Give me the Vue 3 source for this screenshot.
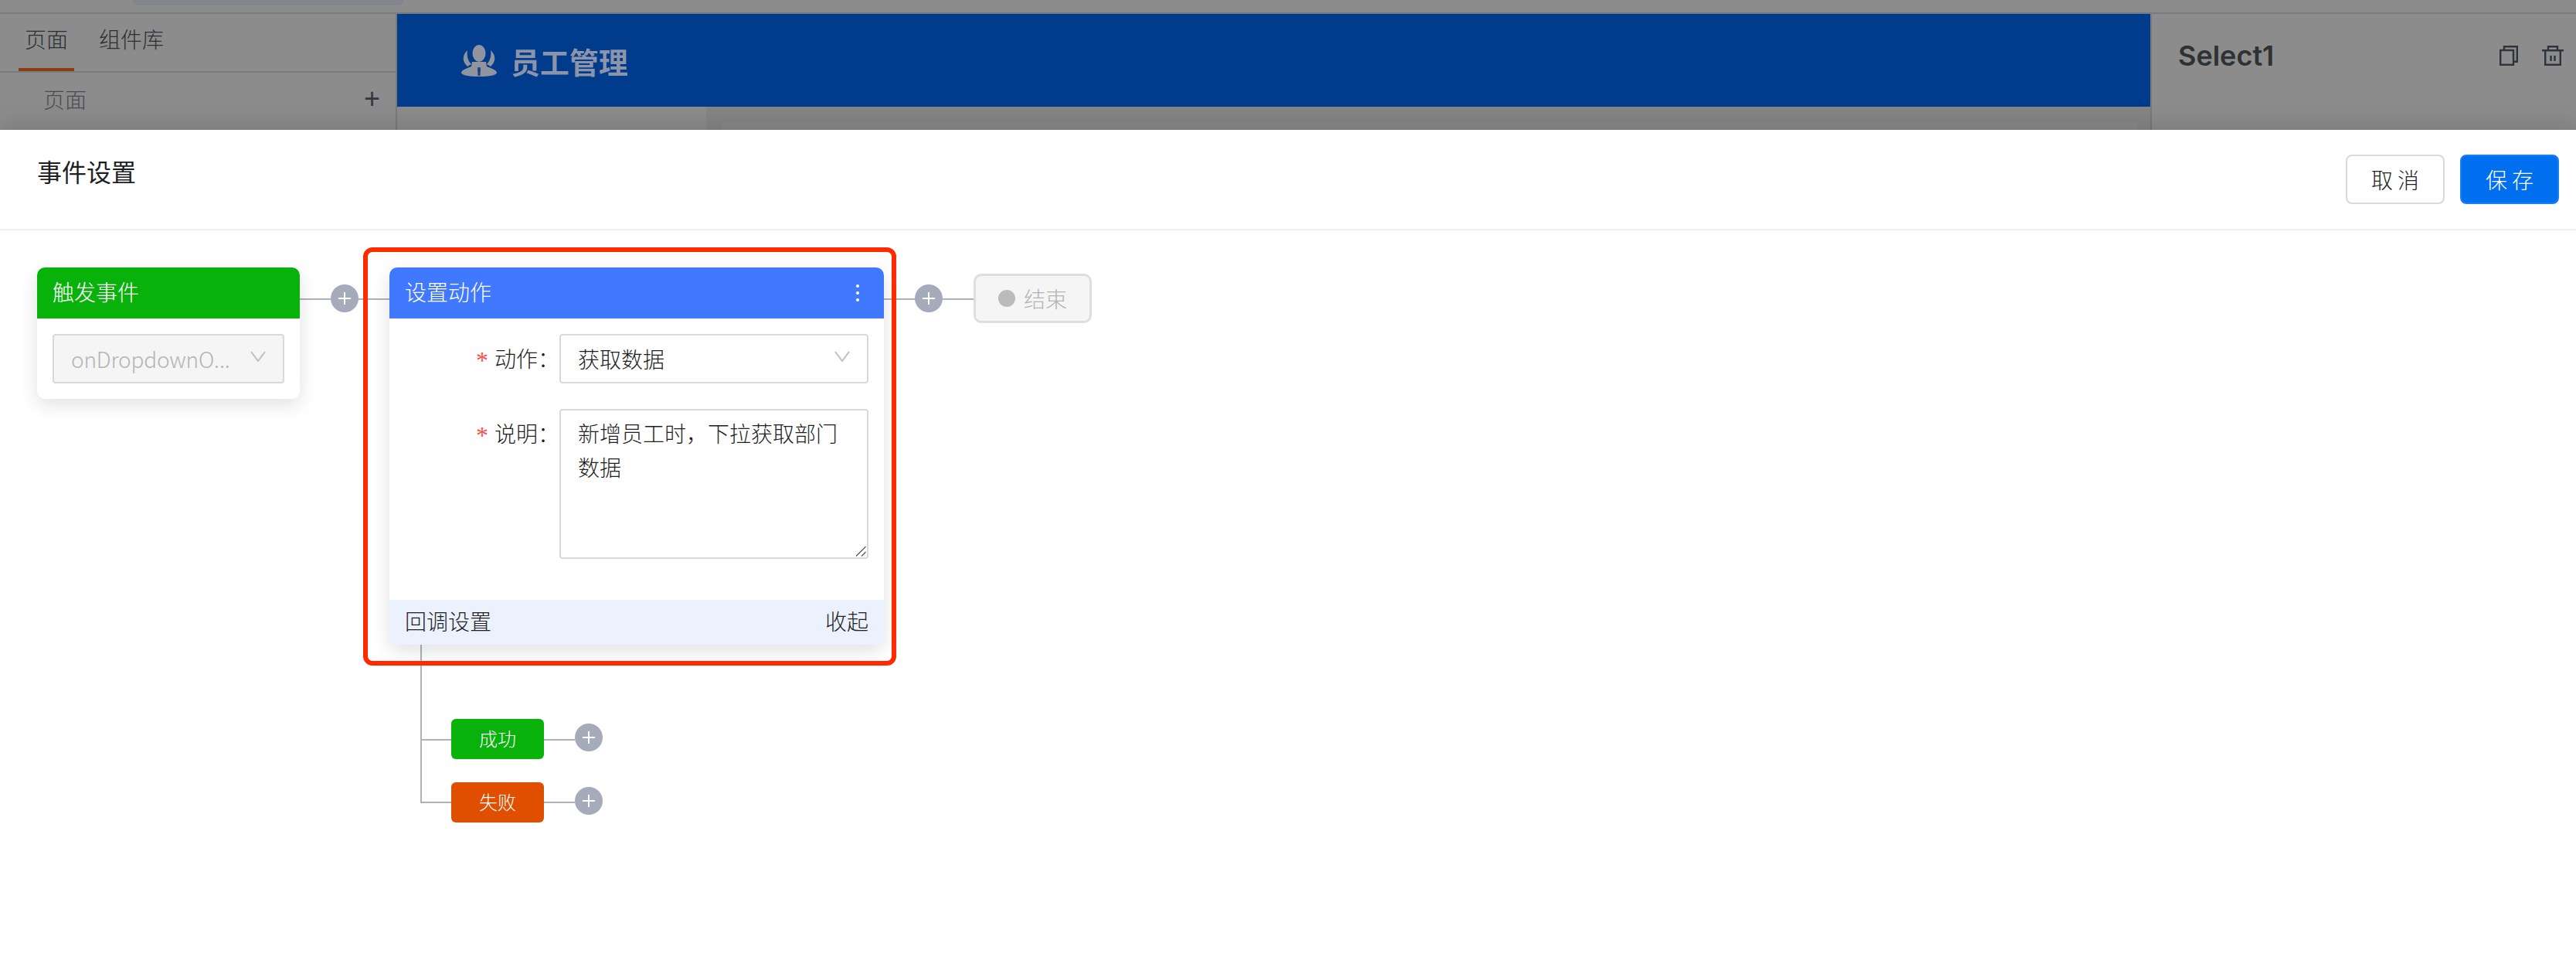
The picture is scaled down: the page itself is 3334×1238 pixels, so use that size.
<script setup>
const description = '新增员工时，下拉获取部门数据'
</script>

<template>
  <div class="page">
    <div class="backdrop">
      <div class="topbar"><div class="pill"></div></div>
      <div class="workspace">
        <aside class="left">
          <div class="tabs">
            <span class="tab active">页面</span>
            <span class="tab">组件库</span>
          </div>
          <div class="pages"><span>页面</span><span class="add">+</span></div>
        </aside>
        <main class="stage">
          <div class="brand">
            <svg class="logo" viewBox="0 0 46 41" width="46" height="41" fill="#8f949e">
              <ellipse cx="23" cy="11" rx="8.5" ry="11"/>
              <path d="M14 22h18l1 6 5 2c5 2 8 4 8 6 0 3-9 5-23 5S0 39 0 36c0-2 3-4 8-6l5-2z"/>
              <path d="M8 7C1 13 1 22 8 28l5-3C8 20 7 13 8 7z"/>
              <path d="M38 7c7 6 7 15 0 21l-5-3c5-5 6-12 5-18z"/>
              <path d="M21.5 29h3l.5 3-.6 8h-2.8l-.6-8z" fill="#1c4388"/>
            </svg>
            <span class="brand-name">员工管理</span>
          </div>
          <div class="stage-body"><div class="stage-sheet"></div></div>
        </main>
        <aside class="right">
          <span class="select-name">Select1</span>
          <div class="tools">
            <svg width="24" height="26" viewBox="0 0 24 26" fill="none" stroke="#2f343c" stroke-width="2.4">
              <path d="M6 5V1.2h16.8v19.6H18"/>
              <rect x="1.2" y="6" width="16.8" height="18.8"/>
            </svg>
            <svg width="28" height="26" viewBox="0 0 28 26" fill="none" stroke="#2f343c" stroke-width="2.4">
              <path d="M0 6.2h28M8 6V1.2h12V6"/>
              <path d="M4.2 6v18.8h19.6V6"/>
              <path d="M11.5 13v7M16.5 13v7"/>
            </svg>
          </div>
        </aside>
      </div>
    </div>

    <section class="modal">
      <header class="modal-head">
        <h2 class="modal-title">事件设置</h2>
        <div class="actions">
          <button class="btn">取 消</button>
          <button class="btn primary">保 存</button>
        </div>
      </header>

      <div class="canvas">
        <i class="line h" style="left:388px;top:88px;width:116px"></i>
        <i class="line h" style="left:1144px;top:88px;width:116px"></i>
        <i class="line v" style="left:544px;top:536px;height:205px"></i>
        <i class="line h" style="left:544px;top:658px;width:40px"></i>
        <i class="line h" style="left:544px;top:739px;width:40px"></i>
        <i class="line h" style="left:704px;top:658px;width:40px"></i>
        <i class="line h" style="left:704px;top:739px;width:40px"></i>

        <span class="plus" style="left:428px;top:70px"></span>
        <span class="plus" style="left:1184px;top:70px"></span>
        <span class="plus" style="left:744px;top:638px"></span>
        <span class="plus" style="left:744px;top:720px"></span>

        <div class="node trigger">
          <div class="node-head green"><span class="lift">触发事件</span></div>
          <div class="trigger-body">
            <div class="field disabled">
              <span class="latin">onDropdownO...</span>
              <svg class="chev" width="20" height="14" viewBox="0 0 20 14" fill="none" stroke="#bfbfbf" stroke-width="2"><path d="M1 1l9 12 9-12"/></svg>
            </div>
          </div>
        </div>

        <div class="node action">
          <div class="node-head blue">
            <span class="lift">设置动作</span>
            <span class="dots"><b></b><b></b><b></b></span>
          </div>
          <div class="form">
            <div class="row">
              <label class="label"><em>*</em>动作：</label>
              <div class="field">
                <span>获取数据</span>
                <svg class="chev" width="20" height="14" viewBox="0 0 20 14" fill="none" stroke="#bfbfbf" stroke-width="2"><path d="M1 1l9 12 9-12"/></svg>
              </div>
            </div>
            <div class="row">
              <label class="label"><em>*</em>说明：</label>
              <div class="area-wrap">
                <textarea class="area" readonly :value="description"></textarea>
                <svg class="grip" width="14" height="14" viewBox="0 0 14 14" fill="none" stroke="#555" stroke-width="1.2"><path d="M1 13.5L13.5 1M8 13.5L13.5 8"/></svg>
              </div>
            </div>
          </div>
          <div class="node-foot"><span class="lift">回调设置</span><span class="lift">收起</span></div>
        </div>

        <div class="branch ok"><span class="lift">成功</span></div>
        <div class="branch fail"><span class="lift">失败</span></div>

        <div class="end"><i></i><span>结束</span></div>

        <div class="mark"></div>
      </div>
    </section>
  </div>
</template>

<style scoped>
.page {
  width: 3334px;
  height: 1238px;
  display: flex;
  flex-direction: column;
  overflow: hidden;
  font-family: "Noto Sans CJK SC", "Liberation Sans", sans-serif;
  font-weight: 300;
  background: #fff;
}
.lift { transform: translateY(-2px); display: inline-block; }
.backdrop {
  height: 168px;
  flex: none;
  background: #8c8c8c;
  overflow: hidden;
}
.topbar {
  height: 16px;
  border-bottom: 2px solid #767b80;
  padding-left: 172px;
}
.pill {
  width: 350px;
  height: 7px;
  background: #83858c;
  border-radius: 0 0 8px 8px;
}
.workspace {
  display: flex;
  height: 150px;
}
.left {
  width: 514px;
  flex: none;
  border-right: 2px solid #767b80;
  box-sizing: border-box;
}
.tabs {
  height: 76px;
  box-sizing: border-box;
  border-bottom: 2px solid #767b80;
  display: flex;
  gap: 40px;
  padding-left: 32px;
  color: #2c2f32;
  font-size: 28px;
  line-height: 40px;
  padding-top: 12px;
}
.tab { position: relative; }
.tab.active::after {
  content: "";
  position: absolute;
  left: -8px;
  right: -8px;
  top: 58px;
  height: 4px;
  background: #8f3a10;
}
.pages {
  display: flex;
  justify-content: space-between;
  align-items: center;
  padding: 14px 20px 0 56px;
  color: #4a4e52;
  font-size: 28px;
  line-height: 40px;
}
.add {
  color: #33373d;
  font-size: 36px;
  font-family: "Liberation Sans", sans-serif;
  line-height: 40px;
}
.stage {
  flex: 1;
  min-width: 0;
}
.brand {
  height: 120px;
  background: #003b8c;
  display: flex;
  align-items: center;
  padding-left: 83px;
  gap: 18px;
}
.brand .logo { margin-top: 1px; }
.brand-name {
  font-size: 38px;
  font-weight: 700;
  color: #8b94a9;
  filter: blur(0.7px);
}
.stage-body {
  height: 30px;
  margin-left: 400px;
  padding: 20px 17px 0 20px;
  background: #858585;
}
.stage-sheet {
  height: 30px;
  background: #8a8a8a;
}
.right {
  width: 551px;
  flex: none;
  box-sizing: border-box;
  border-left: 2px solid #767b80;
  display: flex;
  justify-content: space-between;
  padding: 34px 16px 0 34px;
}
.select-name {
  font-family: Inter, sans-serif;
  font-weight: 600;
  font-size: 36px;
  line-height: 40px;
  color: #2f3235;
}
.tools {
  display: flex;
  gap: 31px;
  height: 26px;
  margin-top: 7px;
}
.modal {
  flex: 1;
  background: #fff;
  box-shadow: 0 -6px 30px rgba(0, 0, 0, 0.14);
  position: relative;
  display: flex;
  flex-direction: column;
}
.modal-head {
  height: 130px;
  flex: none;
  box-sizing: border-box;
  border-bottom: 2px solid #efefef;
  display: flex;
  justify-content: space-between;
  align-items: flex-start;
  padding: 32px 22px 0 48px;
}
.modal-title {
  margin: 0;
  font-size: 32px;
  font-weight: 400;
  line-height: 42px;
  color: #1f1f1f;
}
.actions {
  display: flex;
  gap: 20px;
}
.btn {
  width: 128px;
  height: 64px;
  box-sizing: border-box;
  border: 2px solid #d9d9d9;
  border-radius: 8px;
  background: #fff;
  color: #222;
  font: inherit;
  font-size: 28px;
  padding: 0;
}
.btn.primary {
  background: #006fef;
  border-color: #1a7ff5;
  color: #fff;
}
.canvas {
  position: relative;
  flex: 1;
}
.line {
  position: absolute;
  background: #adb1bd;
}
.line.h { height: 2px; }
.line.v { width: 2px; }
.plus {
  position: absolute;
  width: 36px;
  height: 36px;
  border-radius: 50%;
  background: #a5abbb;
}
.plus::before,
.plus::after {
  content: "";
  position: absolute;
  background: #fff;
  left: 10px;
  top: 17px;
  width: 16px;
  height: 2px;
}
.plus::after {
  left: 17px;
  top: 10px;
  width: 2px;
  height: 16px;
}
.node {
  position: absolute;
  background: #fff;
  border-radius: 10px;
  box-shadow: 0 8px 24px rgba(0, 0, 0, 0.12);
  display: flex;
  flex-direction: column;
}
.trigger {
  left: 48px;
  top: 48px;
  width: 340px;
  height: 170px;
}
.action {
  left: 504px;
  top: 48px;
  width: 640px;
  height: 488px;
}
.node-head {
  height: 66px;
  flex: none;
  box-sizing: border-box;
  border-radius: 10px 10px 0 0;
  display: flex;
  align-items: center;
  justify-content: space-between;
  padding: 0 22px 0 20px;
  color: #fff;
  font-size: 28px;
}
.green { background: #08b20b; }
.blue { background: #4079ff; }
.dots {
  display: flex;
  flex-direction: column;
  gap: 5px;
  margin-right: 10px;
}
.dots b {
  width: 4px;
  height: 4px;
  border-radius: 50%;
  background: #fff;
}
.trigger-body {
  padding: 20px;
}
.field {
  height: 64px;
  box-sizing: border-box;
  border: 2px solid #d9d9d9;
  border-radius: 4px;
  display: flex;
  align-items: center;
  justify-content: space-between;
  padding: 0 22px;
  font-size: 28px;
  color: #1f1f1f;
  width: 400px;
  background: #fff;
}
.field .chev { margin-bottom: 6px; }
.field.disabled {
  width: 300px;
  background: #f5f5f5;
  color: #b4b4b4;
}
.latin { letter-spacing: -0.2px; }
.form {
  flex: 1;
  padding: 20px 20px 0 0;
  display: flex;
  flex-direction: column;
  gap: 33px;
}
.row {
  display: flex;
  align-items: flex-start;
}
.label {
  width: 220px;
  flex: none;
  box-sizing: border-box;
  text-align: right;
  font-size: 28px;
  line-height: 62px;
  color: #1f1f1f;
  white-space: nowrap;
}
.label em {
  font-style: normal;
  font-family: "Liberation Serif", serif;
  font-size: 32px;
  line-height: 20px;
  color: #ff4d4f;
  margin-right: 8px;
  position: relative;
  top: 2px;
}
.area-wrap {
  position: relative;
  width: 400px;
  height: 194px;
}
.area {
  display: block;
  width: 100%;
  height: 100%;
  box-sizing: border-box;
  border: 2px solid #d9d9d9;
  border-radius: 4px;
  padding: 7px 22px;
  margin: 0;
  font: inherit;
  font-size: 28px;
  line-height: 44px;
  color: #1f1f1f;
  background: #fff;
  outline: none;
  resize: none;
}
.grip {
  position: absolute;
  right: 3px;
  bottom: 3px;
}
.node-foot {
  height: 58px;
  flex: none;
  box-sizing: border-box;
  background: #ebf2fd;
  border-radius: 0 0 10px 10px;
  display: flex;
  align-items: center;
  justify-content: space-between;
  padding: 0 20px;
  font-size: 28px;
  color: #1f1f1f;
}
.branch {
  position: absolute;
  left: 584px;
  width: 120px;
  height: 52px;
  border-radius: 6px;
  color: #fff;
  font-size: 24px;
  display: flex;
  align-items: center;
  justify-content: center;
}
.ok { top: 632px; background: #08b20b; }
.fail { top: 714px; background: #e04e00; }
.end {
  position: absolute;
  left: 1260px;
  top: 56px;
  width: 153px;
  height: 64px;
  box-sizing: border-box;
  border: 3px solid #dedede;
  border-radius: 10px;
  background: #f5f5f5;
  color: #b4b4b4;
  font-size: 28px;
  display: flex;
  align-items: center;
  justify-content: center;
  gap: 11px;
}
.end i {
  width: 22px;
  height: 22px;
  border-radius: 50%;
  background: #bbb;
}
.mark {
  position: absolute;
  left: 470px;
  top: 22px;
  width: 690px;
  height: 541px;
  box-sizing: border-box;
  border: 6px solid #ff2a00;
  border-radius: 12px;
  pointer-events: none;
}
</style>
